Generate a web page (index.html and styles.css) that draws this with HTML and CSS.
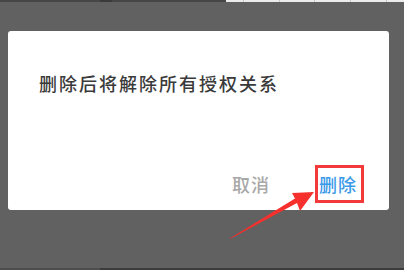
FILE: index.html
```html
<!DOCTYPE html>
<html lang="zh">
<head>
<meta charset="utf-8">
<link rel="stylesheet" href="styles.css">
</head>
<body>
<div class="topbar">
  <div class="top-dark"><span class="top-mark"></span></div>
  <div class="top-light"><span></span><span></span><span></span><span></span><span></span></div>
</div>
<div class="dialog">
  <p class="message">删除后将解除所有授权关系</p>
  <div class="actions">
    <span class="btn cancel">取消</span>
    <span class="btn confirm">删除</span>
  </div>
</div>
<div class="bottombar"><span class="bottom-dark"></span></div>
<svg class="arrow" width="404" height="270" viewBox="0 0 404 270">
  <polygon points="229,239.5 297,203 300,211 314,192 292,193 295,198.5 230.5,238" fill="#f5302d"/>
</svg>
</body>
</html>
```
FILE: styles.css
```css
html, body {
  margin: 0;
  padding: 0;
}
body {
  width: 404px;
  height: 270px;
  background: #616161;
  font-family: "Noto Sans CJK SC", "Noto Sans", sans-serif;
  position: relative;
  overflow: hidden;
}
.topbar {
  display: flex;
  height: 2px;
}
.top-dark {
  width: 226px;
  background: #474747;
  display: flex;
}
.top-mark {
  margin-left: 100px;
  width: 12px;
  background: #3a3a3a;
}
.top-light {
  flex: 1;
  background: #ececec;
  display: flex;
  justify-content: space-around;
}
.top-light span {
  width: 1px;
  background: #c8c8c8;
}
.dialog {
  margin: 29px 0 0 8px;
  width: 381px;
  height: 179px;
  background: #fff;
  border-radius: 3px;
  display: flex;
  flex-direction: column;
  box-sizing: border-box;
  padding: 40px 25px 7px 31px;
}
.message {
  margin: 0;
  font-size: 18px;
  line-height: 24px;
  letter-spacing: 2px;
  font-weight: 500;
  color: #3a3a3a;
}
.actions {
  margin-top: auto;
  display: flex;
  justify-content: flex-end;
  align-items: center;
  gap: 45px;
}
.btn {
  font-size: 18px;
  line-height: 32px;
  letter-spacing: 1px;
  font-weight: 500;
}
.cancel {
  color: #a8a8a8;
}
.confirm {
  color: #3b9ae8;
  border: 3px solid #f23a3a;
  padding: 0 4px 0 1px;
}
.bottombar {
  position: absolute;
  left: 0;
  right: 0;
  bottom: 0;
  height: 2px;
  background: #4d4d4d;
  display: flex;
}
.bottom-dark {
  margin-left: 100px;
  flex: 1;
  background: #3c3c3c;
}
.arrow {
  position: absolute;
  left: 0;
  top: 0;
}
```
